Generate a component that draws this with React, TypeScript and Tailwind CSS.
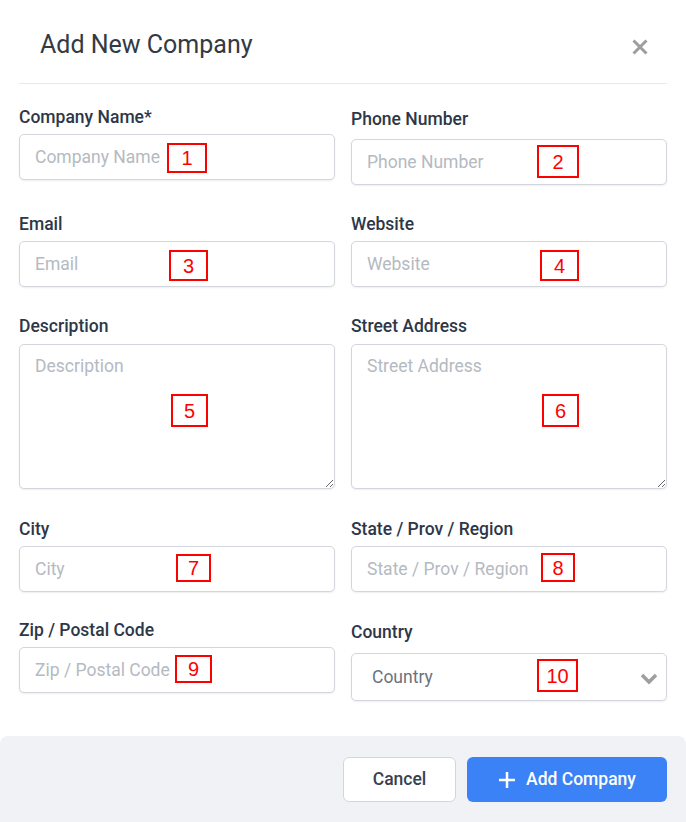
import React from 'react';

type Mark = { n: number; left: number; top: number; w: number; h: number };

// red numbered markers that sit over the form in the reference
const marks: Mark[] = [
    { n: 1, left: 167, top: 143, w: 40, h: 30 },
    { n: 2, left: 537, top: 145, w: 42, h: 33 },
    { n: 3, left: 169, top: 250, w: 39, h: 31 },
    { n: 4, left: 540, top: 250, w: 39, h: 31 },
    { n: 5, left: 171, top: 394, w: 37, h: 33 },
    { n: 6, left: 542, top: 394, w: 37, h: 33 },
    { n: 7, left: 176, top: 554, w: 35, h: 28 },
    { n: 8, left: 541, top: 553, w: 34, h: 29 },
    { n: 9, left: 175, top: 655, w: 37, h: 28 },
    { n: 10, left: 537, top: 659, w: 41, h: 33 },
];

const labelCls = 'block text-[17.5px] leading-[20px] font-medium text-[#2d3748]';
const inputCls =
    'w-full h-[46px] rounded-[5px] border border-[#d3d6dc] bg-white px-[15px] text-[17.5px] text-[#2d3748] placeholder:text-[#b4bac1] shadow-[0_1px_2px_rgba(0,0,0,0.07)] outline-none';

const TextField: React.FC<{ label: string; placeholder?: string; shifted?: boolean }> = ({ label, placeholder, shifted }) => (
    <div className={shifted ? 'pt-[2px]' : ''}>
        <label className={labelCls}>{label}</label>
        <input className={`${inputCls} ${shifted ? 'mt-[10px]' : 'mt-[7px]'}`} placeholder={placeholder ?? label} />
    </div>
);

const AreaField: React.FC<{ label: string }> = ({ label }) => (
    <div>
        <label className={labelCls}>{label}</label>
        <textarea
            className="mt-[8px] block w-full h-[145px] rounded-[5px] border border-[#d3d6dc] bg-white px-[15px] py-[9px] text-[17.5px] leading-[24px] placeholder:text-[#b4bac1] shadow-[0_1px_2px_rgba(0,0,0,0.07)] outline-none"
            placeholder={label}
        />
    </div>
);

const App: React.FC = () => {
    return (
        <div className="relative w-[686px] h-[822px] bg-white flex flex-col font-['Roboto','Liberation_Sans',sans-serif]">
            <div className="h-[83px] flex justify-between items-start pl-[40px] pr-[38px] pt-[30px]">
                <h2 className="text-[25px] leading-[30px] font-normal text-[#333a44]">Add New Company</h2>
                <button className="mt-[9px] text-[#9e9e9e]" title="Close">
                    <svg width="16" height="16" viewBox="0 0 16 16" fill="none" stroke="currentColor" strokeWidth="3">
                        <path d="M1.5 1.5 L14.5 14.5 M14.5 1.5 L1.5 14.5" />
                    </svg>
                </button>
            </div>
            <div className="mx-[19px] h-px bg-[#e6e8ec]" />

            <div className="px-[19px] pt-[23px] flex flex-col">
                <div className="grid grid-cols-2 gap-x-4 items-start">
                    <TextField label="Company Name*" placeholder="Company Name" />
                    <TextField label="Phone Number" shifted />
                </div>
                <div className="grid grid-cols-2 gap-x-4 items-start mt-[29px]">
                    <TextField label="Email" />
                    <TextField label="Website" />
                </div>
                <div className="grid grid-cols-2 gap-x-4 items-start mt-[29px]">
                    <AreaField label="Description" />
                    <AreaField label="Street Address" />
                </div>
                <div className="grid grid-cols-2 gap-x-4 items-start mt-[30px]">
                    <TextField label="City" />
                    <TextField label="State / Prov / Region" />
                </div>
                <div className="grid grid-cols-2 gap-x-4 items-start mt-[28px]">
                    <TextField label="Zip / Postal Code" />
                    <div className="pt-[2px]">
                        <label className={labelCls}>Country</label>
                        <div className="relative mt-[11px]">
                            <select className="appearance-none w-full h-[48px] rounded-[5px] border border-[#d3d6dc] bg-white pl-[20px] text-[17.5px] text-[#6b7280] shadow-[0_1px_2px_rgba(0,0,0,0.07)] outline-none">
                                <option>Country</option>
                            </select>
                            <svg className="absolute right-[9px] top-[20px] text-[#9e9e9e]" width="18" height="12" viewBox="0 0 18 12" fill="none" stroke="currentColor" strokeWidth="3.5">
                                <path d="M2 2 L9 9 L16 2" />
                            </svg>
                        </div>
                    </div>
                </div>
            </div>

            <div className="mt-auto h-[86px] rounded-t-[8px] bg-[#f1f2f6] flex justify-end items-start gap-[11px] pt-[21px] pr-[19px]">
                <button className="w-[113px] h-[45px] rounded-[6px] border border-[#d3d6dc] bg-white text-[17.5px] font-medium text-[#374151]">
                    Cancel
                </button>
                <button className="w-[200px] h-[45px] rounded-[6px] bg-[#3b82f6] text-white text-[17.5px] font-medium flex items-center justify-center gap-[10px]">
                    <svg width="18" height="18" viewBox="0 0 18 18" fill="none" stroke="currentColor" strokeWidth="2.5">
                        <path d="M9 1 V17 M1 9 H17" />
                    </svg>
                    <span>Add Company</span>
                </button>
            </div>

            {marks.map(m => (
                <div
                    key={m.n}
                    className="absolute border-2 border-[#ff0000] flex items-center justify-center text-[20px] leading-none text-[#ff0000] font-['Liberation_Sans',Arial,sans-serif]"
                    style={{ left: m.left, top: m.top, width: m.w, height: m.h }}
                >
                    {m.n}
                </div>
            ))}
        </div>
    );
};

export default App;
